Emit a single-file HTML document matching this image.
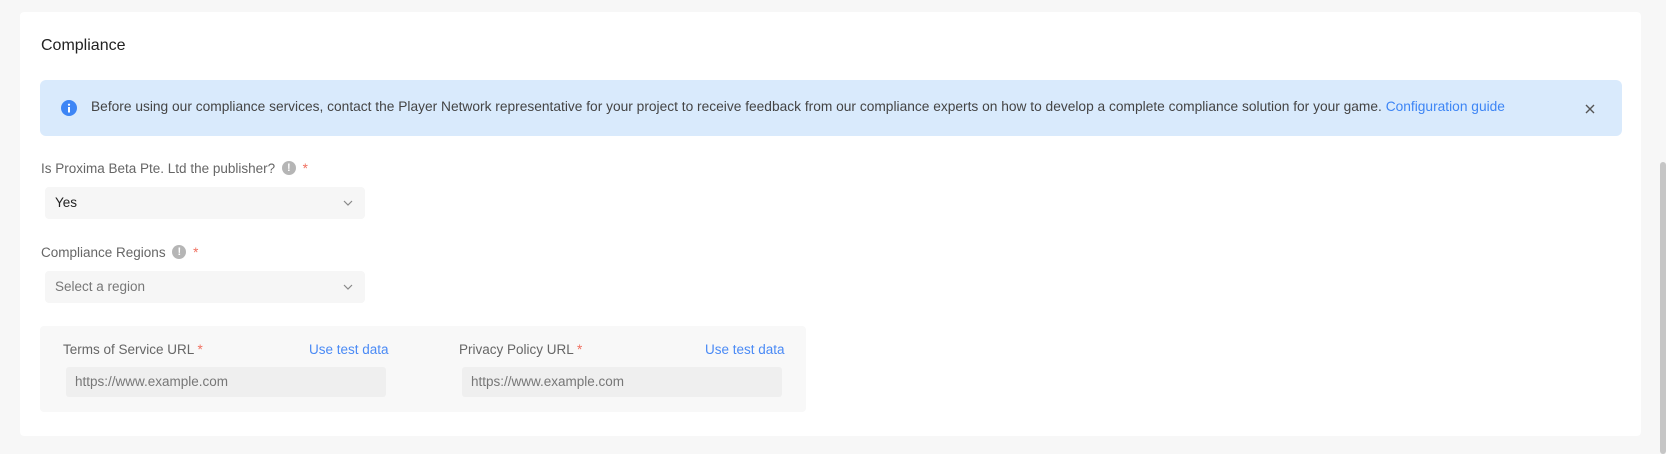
<!DOCTYPE html>
<html><head><style>
*{box-sizing:border-box;margin:0;padding:0}
body{width:1666px;height:454px;background:#f7f7f7;font-family:"Liberation Sans",sans-serif;position:relative;overflow:hidden;color:#333}
.card{position:absolute;left:20px;top:12px;width:1621px;height:424px;background:#fff;border-radius:4px}
.abs{position:absolute}
.title{left:41px;top:37px;font-size:16px;color:#222}
.alert{left:40px;top:80px;width:1582px;height:56px;background:#d9eafc;border-radius:6px}
.alert .txt{position:absolute;left:51px;top:19px;font-size:13.75px;color:#444;white-space:nowrap}
.alert a{color:#3d85f5;text-decoration:none}
.lbl{font-size:13.5px;color:#666;white-space:nowrap}
.star{color:#f07060}
.q{display:inline-block;width:14px;height:14px;border-radius:50%;background:#b5b5b5;color:#fff;font-size:11px;font-weight:bold;text-align:center;line-height:14px;vertical-align:middle;margin:0 3px;position:relative;top:-1px}
.sel{background:#f6f6f6;border-radius:4px;height:32px;width:320px;font-size:13.5px;line-height:32px;padding-left:10px}
.chev{position:absolute;right:12px;top:12px}
.panel{left:40px;top:326px;width:766px;height:86px;background:#f8f8f8;border-radius:4px}
.inp{background:#efefef;border-radius:3px;height:30px;width:320px;font-size:13.5px;color:#777;line-height:30px;padding-left:9px}
.link{color:#4a8af5;font-size:13.5px}
</style></head><body>
<div class="card"></div>
<div class="abs title">Compliance</div>
<div class="abs alert">
<svg class="abs" style="left:21px;top:20px" width="16" height="16" viewBox="0 0 16 16"><circle cx="8" cy="8" r="8" fill="#3d85f5"/><rect x="7" y="7" width="2" height="5.5" fill="#fff"/><circle cx="8" cy="4.7" r="1.1" fill="#fff"/></svg>
<div class="txt">Before using our compliance services, contact the Player Network representative for your project to receive feedback from our compliance experts on how to develop a complete compliance solution for your game. <a>Configuration guide</a></div>
<svg class="abs" style="left:1545px;top:24px" width="10" height="10" viewBox="0 0 10 10"><path d="M1 1L9 9M9 1L1 9" stroke="#555" stroke-width="1.4"/></svg>
</div>
<div class="abs lbl" style="left:41px;top:161px">Is Proxima Beta Pte. Ltd the publisher? <span class="q">!</span> <span class="star">*</span></div>
<div class="abs sel" style="left:45px;top:187px;color:#222">Yes<svg class="chev" width="10" height="8" viewBox="0 0 10 8"><path d="M1 2l4 4 4-4" fill="none" stroke="#888" stroke-width="1.2"/></svg></div>
<div class="abs lbl" style="left:41px;top:245px">Compliance Regions <span class="q">!</span> <span class="star">*</span></div>
<div class="abs sel" style="left:45px;top:271px;color:#777">Select a region<svg class="chev" width="10" height="8" viewBox="0 0 10 8"><path d="M1 2l4 4 4-4" fill="none" stroke="#888" stroke-width="1.2"/></svg></div>
<div class="abs panel"></div>
<div class="abs lbl" style="left:63px;top:342px">Terms of Service URL <span class="star">*</span></div>
<div class="abs link" style="left:309px;top:342px">Use test data</div>
<div class="abs inp" style="left:66px;top:367px">https://www.example.com</div>
<div class="abs lbl" style="left:459px;top:342px">Privacy Policy URL <span class="star">*</span></div>
<div class="abs link" style="left:705px;top:342px">Use test data</div>
<div class="abs inp" style="left:462px;top:367px">https://www.example.com</div>
<div class="abs" style="left:1660px;top:162px;width:6px;height:292px;background:#c6c6c6;border-radius:3px"></div>
</body></html>
